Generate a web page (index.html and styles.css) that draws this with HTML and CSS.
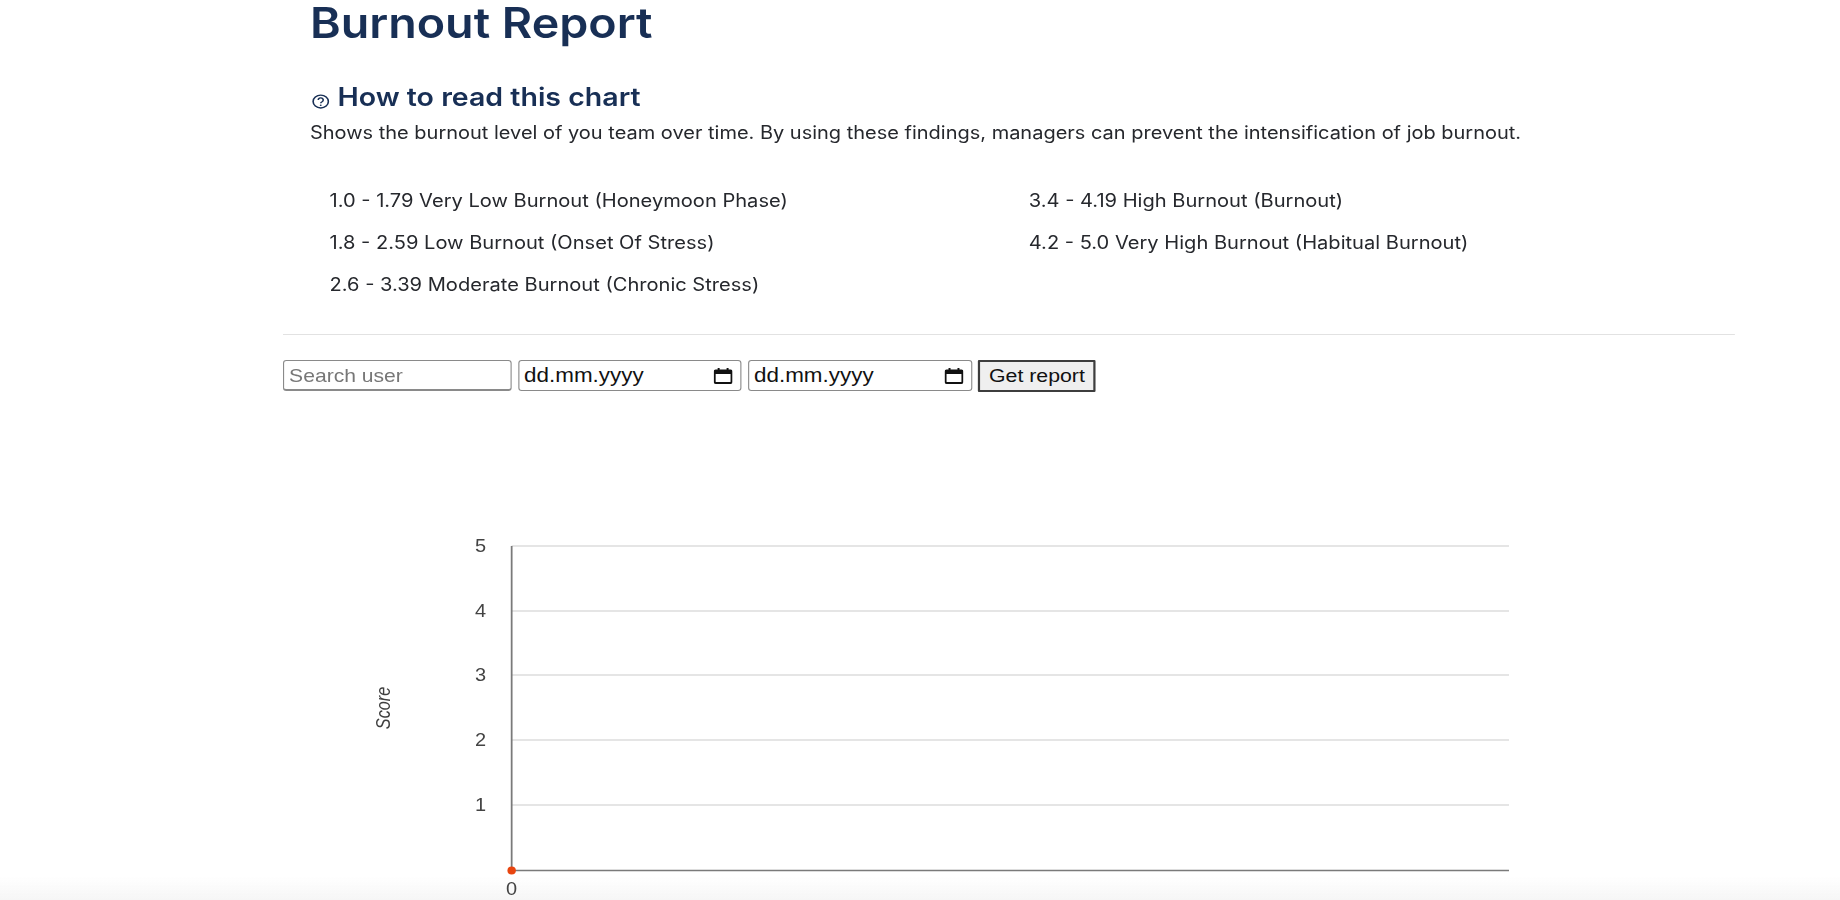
FILE: index.html
```html
<!DOCTYPE html>
<html lang="en">
<head>
<meta charset="utf-8">
<title>Burnout Report</title>
<link rel="stylesheet" href="styles.css">
</head>
<body>
<main class="page">
  <section class="intro">
    <h1 class="title">Burnout Report</h1>
    <h2 class="subtitle">
      <svg class="help-icon" viewBox="0 0 20 20" preserveAspectRatio="none" aria-hidden="true"><circle cx="10" cy="10" r="8.6"/><path d="M7.2 8a2.800 2.800 0 1 1 4.300 2.300c-1 .6-1.500 1-1.500 2"/><circle class="dot" cx="10" cy="15" r="1.100"/></svg>
      How to read this chart
    </h2>
    <p class="lead">Shows the burnout level of you team over time. By using these findings, managers can prevent the intensification of job burnout.</p>
    <div class="legend">
      <span>1.0 - 1.79 Very Low Burnout (Honeymoon Phase)</span>
      <span>3.4 - 4.19 High Burnout (Burnout)</span>
      <span>1.8 - 2.59 Low Burnout (Onset Of Stress)</span>
      <span>4.2 - 5.0 Very High Burnout (Habitual Burnout)</span>
      <span>2.6 - 3.39 Moderate Burnout (Chronic Stress)</span>
    </div>
  </section>
  <hr class="rule">
  <form class="filters">
    <input class="field field-search" type="text" placeholder="Search user">
    <div class="field field-date"><span>dd.mm.yyyy</span>
      <svg class="cal" viewBox="0 0 19 16" preserveAspectRatio="none" aria-hidden="true"><path fill-rule="evenodd" d="M4 0h2v1.500h7V0h2v1.500h2A2 2 0 0 1 19 3.500V14a2 2 0 0 1-2 2H2a2 2 0 0 1-2-2V3.500a2 2 0 0 1 2-2h2zM2 6v7.500a.5.5 0 0 0 .5.5h14a.5.5 0 0 0 .5-.5V6z"/></svg></div>
    <div class="field field-date"><span>dd.mm.yyyy</span>
      <svg class="cal" viewBox="0 0 19 16" preserveAspectRatio="none" aria-hidden="true"><path fill-rule="evenodd" d="M4 0h2v1.500h7V0h2v1.500h2A2 2 0 0 1 19 3.500V14a2 2 0 0 1-2 2H2a2 2 0 0 1-2-2V3.500a2 2 0 0 1 2-2h2zM2 6v7.500a.5.5 0 0 0 .5.5h14a.5.5 0 0 0 .5-.5V6z"/></svg></div>
    <button class="submit" type="button">Get report</button>
  </form>
  <svg class="chart" viewBox="0 0 1308 500" width="1308" height="500">
    <g class="grid">
      <line x1="206" x2="1104.500" y1="123" y2="123"/>
      <line x1="206" x2="1104.500" y1="188" y2="188"/>
      <line x1="206" x2="1104.500" y1="252" y2="252"/>
      <line x1="206" x2="1104.500" y1="317" y2="317"/>
      <line x1="206" x2="1104.500" y1="382" y2="382"/>
    </g>
    <g class="axis">
      <line x1="206" x2="206" y1="123" y2="447.500"/>
      <line x1="206" x2="1104.500" y1="447.500" y2="447.500"/>
    </g>
    <g class="ticks">
      <text x="183" y="129">5</text>
      <text x="183" y="194">4</text>
      <text x="183" y="258">3</text>
      <text x="183" y="323">2</text>
      <text x="183" y="388">1</text>
      <text x="206" y="472" class="tick-x">0</text>
    </g>
    <text class="axis-title" transform="translate(96 285) rotate(-90) scale(.9 1)">Score</text>
    <ellipse class="point" cx="206" cy="447.500" rx="3.800" ry="4"/>
  </svg>
</main>
<div class="fade"></div>
</body>
</html>
```
FILE: styles.css
```css
* { box-sizing: border-box; }
html { background: #fff; }
html, body { margin: 0; height: 900px; overflow: hidden; }
body { font-family: Inter, "Liberation Sans", sans-serif; color: #26282d; }
.page { width: 1308px; margin-left: 283px; transform: scaleX(1.11); transform-origin: 0 0; }
.intro { padding-left: 24.3px; }
.title { margin: 0; font-size: 42px; line-height: 46px; font-weight: 600; color: #182f55; }
.subtitle { margin: 34px 0 0; font-size: 25.7px; line-height: 34px; font-weight: 600; color: #182f55; display: flex; align-items: center; }
.help-icon { width: 16px; height: 15px; margin: 8px 7.300px 0 1.5px; fill: none; stroke: #182f55; stroke-width: 1.800; }
.help-icon .dot { fill: #182f55; stroke: none; }
.lead { margin: 5.500px 0 0; font-size: 18px; line-height: 26px; }
.legend { display: grid; grid-template-columns: 630px 1fr; row-gap: 18px; margin: 42px 0 0 17.6px; font-size: 18.1px; line-height: 24px; }
.rule { margin: 38px 0 0; border: 0; border-top: 1px solid #e2e2e2; }
.filters { display: flex; gap: 5.4px; margin-top: 25px; align-items: center; }
.field { height: 31px; border: 1px solid #8a8a8a; border-radius: 3px; background: #fff; font: 20.2px "Liberation Sans", sans-serif; color: #111; padding: 0 4.500px; }
.field-search { width: 206.3px; font-size: 19px; border-bottom-width: 2px; padding-top: 2px; }
.field-search::placeholder { color: #777; }
.field-date { width: 201.8px; display: flex; align-items: center; justify-content: space-between; padding-right: 7px; }
.cal { width: 17px; height: 16px; fill: #111; }
.submit { width: 106.3px; height: 32px; border: 2px solid #3d3d3d; border-radius: 1px; background: #efefef; font: 19.2px "Liberation Sans", sans-serif; color: #111; padding: 0; }
.chart { display: block; margin-top: 31px; overflow: visible; }
.grid line { stroke: #ddd; stroke-width: 1.500; }
.axis line { stroke: #7a7a7a; stroke-width: 1.600; }
.ticks text { font: 18px "Liberation Sans", sans-serif; fill: #444; text-anchor: end; }
.ticks .tick-x { text-anchor: middle; }
.axis-title { font: italic 18px "Liberation Sans", sans-serif; fill: #3f3f3f; text-anchor: middle; }
.point { fill: #e8450f; }
.fade { position: fixed; z-index: -1; left: 0; right: 0; bottom: 0; height: 24px; background: linear-gradient(#fff0, #f6f6f6); }
```
